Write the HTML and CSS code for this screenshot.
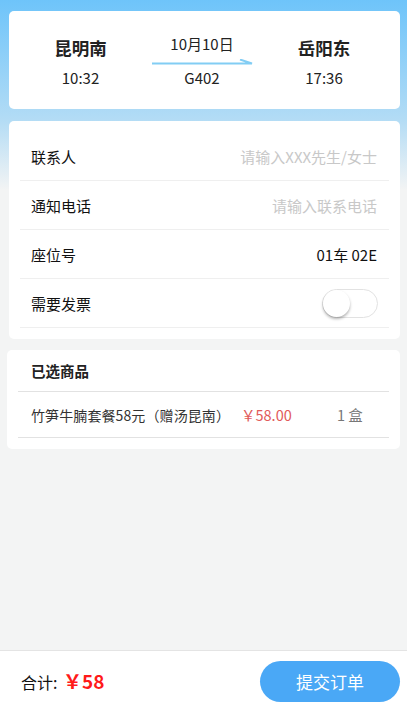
FILE: index.html
```html
<!DOCTYPE html>
<html lang="zh">
<head>
<meta charset="utf-8">
<title>提交订单</title>
<link rel="stylesheet" href="styles.css">
</head>
<body>
<div class="page">
  <main class="main">
    <section class="card trip">
      <div class="station from">
        <div class="name">昆明南</div>
        <div class="time">10:32</div>
      </div>
      <div class="mid">
        <div class="date">10月10日</div>
        <svg class="arrow" width="101" height="6" viewBox="0 0 101 6">
          <path d="M0 4.5 H100 L88 0.5" fill="none" stroke="#82cdf4" stroke-width="2"/>
        </svg>
        <div class="train">G402</div>
      </div>
      <div class="station to">
        <div class="name">岳阳东</div>
        <div class="time">17:36</div>
      </div>
    </section>

    <section class="card form">
      <div class="row"><span class="label">联系人</span><span class="ph">请输入XXX先生/女士</span></div>
      <div class="row"><span class="label">通知电话</span><span class="ph">请输入联系电话</span></div>
      <div class="row"><span class="label">座位号</span><span class="val">01车 02E</span></div>
      <div class="row"><span class="label">需要发票</span><span class="switch"><span class="knob"></span></span></div>
    </section>

    <section class="card goods">
      <div class="goods-title">已选商品</div>
      <div class="goods-row">
        <span class="gname">竹笋牛腩套餐58元（赠汤昆南）</span>
        <span class="gprice">￥58.00</span>
        <span class="gqty">1 盒</span>
      </div>
    </section>
  </main>
  <footer class="footer">
    <div class="total">合计: <span class="amount">￥58</span></div>
    <button class="submit">提交订单</button>
  </footer>
</div>
</body>
</html>
```
FILE: styles.css
```css
* { box-sizing: border-box; }
html, body { margin: 0; padding: 0; }
body {
  font-family: "Noto Sans CJK SC", "Liberation Sans", sans-serif;
  color: #222;
  background: #f3f4f4;
}
.page {
  min-height: 709px;
  display: flex;
  flex-direction: column;
  background: linear-gradient(180deg, #6ec4fa 0px, #b3dcf5 120px, #f3f4f4 190px, #f3f4f4 100%);
}
.main {
  flex: 1;
  padding: 11px 7px 0 7px;
  display: flex;
  flex-direction: column;
}
.card {
  background: #fff;
  border-radius: 5px;
}
.trip {
  margin-left: 2px;
  height: 98px;
  display: flex;
  align-items: flex-start;
  padding-top: 26px;
}
.station {
  display: flex;
  flex-direction: column;
  align-items: center;
}
.station.from { width: 143px; }
.station.to { width: 144px; }
.station .name {
  font-size: 17.5px;
  font-weight: bold;
  line-height: 22px;
  color: #222;
}
.station .time {
  font-size: 15px;
  line-height: 20px;
  margin-top: 9px;
  color: #222;
}
.mid {
  width: 100px;
  display: flex;
  flex-direction: column;
  align-items: center;
  margin-top: -3px;
}
.mid .date { font-size: 15px; line-height: 20px; color: #222; }
.mid .arrow { display: block; margin-top: 5px; }
.mid .train { font-size: 15px; line-height: 20px; margin-top: 3px; color: #222; }

.form {
  margin-top: 12px;
  margin-left: 2px;
  padding: 11px 11px 11px 11px;
}
.row {
  height: 49px;
  border-bottom: 1px solid #efefef;
  display: flex;
  align-items: center;
  justify-content: space-between;
  padding: 0 12px 0 11px;
  font-size: 15px;
}
.label { color: #111; }
.ph { color: #c8c8c8; }
.val { color: #111; }
.switch {
  width: 56px;
  height: 29px;
  border: 1px solid #e2e2e2;
  border-radius: 15px;
  display: flex;
  align-items: center;
  margin-right: -1px;
}
.knob {
  width: 27px;
  height: 27px;
  border-radius: 50%;
  background: #fff;
  box-shadow: 0 2px 3px rgba(0,0,0,0.3);
}

.goods {
  margin-top: 11px;
  padding: 0 11px 11px 11px;
}
.goods-title {
  height: 42px;
  display: flex;
  align-items: center;
  padding-left: 13px;
  font-size: 14.5px;
  font-weight: bold;
  color: #222;
  border-bottom: 1px solid #e2e2e2;
}
.goods-row {
  height: 46px;
  display: flex;
  align-items: center;
  padding-left: 13px;
  font-size: 14px;
  border-bottom: 1px solid #e2e2e2;
}
.gname { color: #333; width: 210px; letter-spacing: 0.1px; }
.gprice { color: #e15a5a; width: 96px; font-size: 14.5px; }
.gqty { color: #777; font-size: 14.5px; }

.footer {
  height: 59px;
  background: #fff;
  border-top: 1px solid #e4e4e4;
  display: flex;
  align-items: center;
  justify-content: space-between;
  padding: 0 7px 0 21px;
}
.total { font-size: 16px; color: #111; }
.amount { color: #ff1a1a; font-weight: bold; font-size: 19px; margin-left: 2px; }
.submit {
  width: 140px;
  height: 41px;
  border: none;
  border-radius: 21px;
  background: #4aa8f6;
  color: #fff;
  font-family: inherit;
  font-size: 17px;
  margin-top: 2px;
}
```
